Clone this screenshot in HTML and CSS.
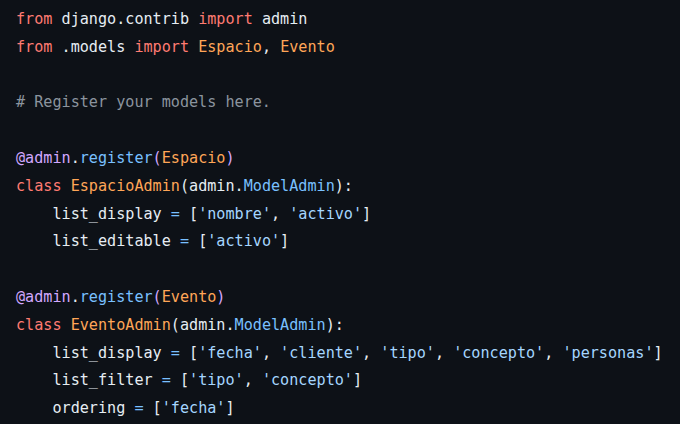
FILE: index.html
```html
<!DOCTYPE html>
<html>
<head>
<meta charset="utf-8">
<link rel="stylesheet" href="styles.css">
</head>
<body>
<div class="code">
<div class="line"><span class="k">from</span> django.contrib <span class="k">import</span> admin</div>
<div class="line"><span class="k">from</span> .models <span class="k">import</span> <span class="o">Espacio</span>, <span class="o">Evento</span></div>
<div class="line"></div>
<div class="line"><span class="c"># Register your models here.</span></div>
<div class="line"></div>
<div class="line"><span class="p">@admin</span>.<span class="b">register</span><span class="p">(</span><span class="o">Espacio</span><span class="p">)</span></div>
<div class="line"><span class="k">class</span> <span class="o">EspacioAdmin</span>(admin.<span class="b">ModelAdmin</span>):</div>
<div class="line">    list_display <span class="b">=</span> [<span class="s">'nombre'</span>, <span class="s">'activo'</span>]</div>
<div class="line">    list_editable <span class="b">=</span> [<span class="s">'activo'</span>]</div>
<div class="line"></div>
<div class="line"><span class="p">@admin</span>.<span class="b">register</span><span class="p">(</span><span class="o">Evento</span><span class="p">)</span></div>
<div class="line"><span class="k">class</span> <span class="o">EventoAdmin</span>(admin.<span class="b">ModelAdmin</span>):</div>
<div class="line">    list_display <span class="b">=</span> [<span class="s">'fecha'</span>, <span class="s">'cliente'</span>, <span class="s">'tipo'</span>, <span class="s">'concepto'</span>, <span class="s">'personas'</span>]</div>
<div class="line">    list_filter <span class="b">=</span> [<span class="s">'tipo'</span>, <span class="s">'concepto'</span>]</div>
<div class="line">    ordering <span class="b">=</span> [<span class="s">'fecha'</span>]</div>
</div>
</body>
</html>
```
FILE: styles.css
```css
html, body {
  margin: 0;
  padding: 0;
  background: #0d1117;
  height: 100%;
  overflow: hidden;
}
.code {
  padding: 6px 16px;
  font-family: "DejaVu Sans Mono", monospace;
  font-size: 15.14px;
  line-height: 27.8px;
  color: #e6edf3;
}
.line {
  white-space: pre;
  height: 27.8px;
}
.k { color: #ff7b72; }
.o { color: #ffa657; }
.c { color: #8b949e; }
.p { color: #d2a8ff; }
.b { color: #79c0ff; }
.s { color: #a5d6ff; }
```
